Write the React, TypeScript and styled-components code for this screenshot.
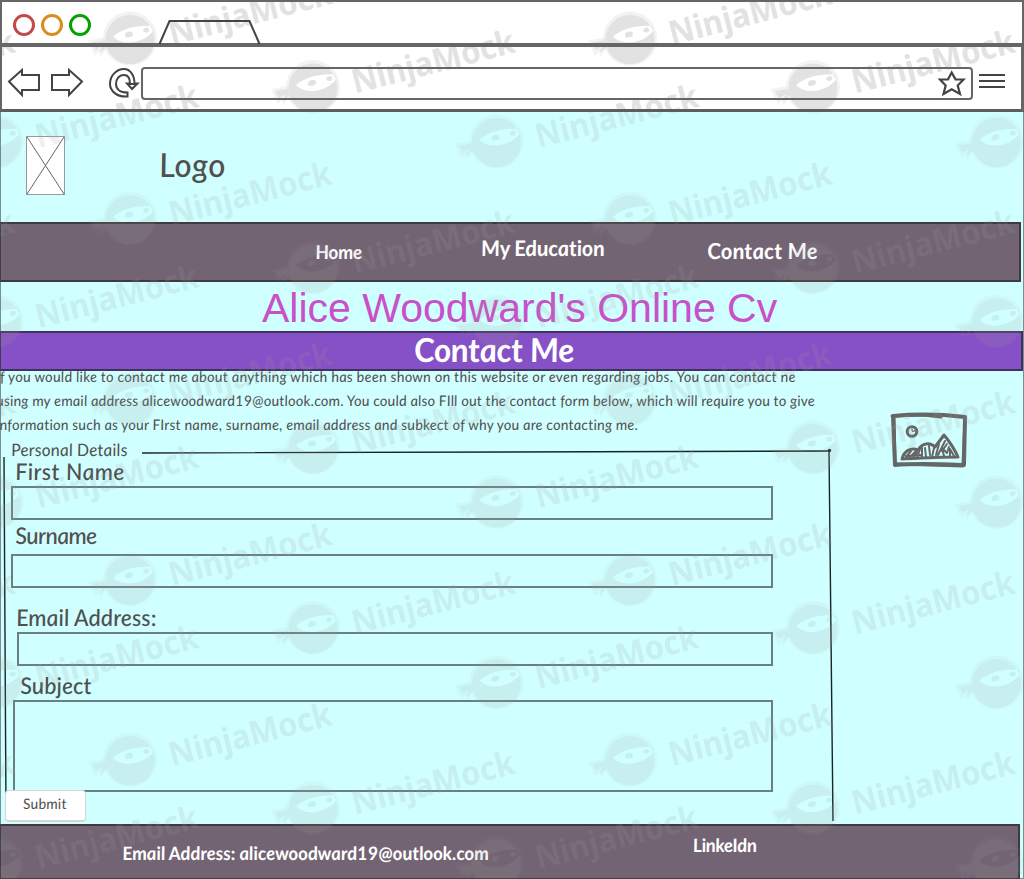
import React from "react";
import styled, { createGlobalStyle, css } from "styled-components";

const INK = "#505050";
const LINE = "#666666";
const PLUM = "#736473";

const GlobalStyle = createGlobalStyle`
  *, *::before, *::after { box-sizing: border-box; }
  body { margin: 0; }
`;

/* Single-storey italic letterforms, straightened up to read as handwriting. */
const hand = css`
  font-family: Lato, "Liberation Sans", sans-serif;
  font-style: italic;
  white-space: nowrap;
`;

const upright = css`
  transform: skewX(6deg);
`;

const Upright = styled.span`
  display: inline-block;
  ${upright}
`;

const Page = styled.div`
  position: relative;
  display: flex;
  flex-direction: column;
  width: 1024px;
  height: 879px;
  overflow: hidden;
  background: #d0ffff;
`;

/* ---------- browser chrome ---------- */

const Chrome = styled.header`
  position: relative;
  flex: none;
  display: flex;
  flex-direction: column;
  height: 112px;
  overflow: hidden;
  background: #fff;
  border: solid ${LINE};
  border-width: 2px 2px 0;
`;

const TitleBar = styled.div`
  position: relative;
  display: flex;
  align-items: flex-start;
  height: 45px;
  padding: 12px 0 0 11px;
  border-bottom: 4px solid ${LINE};
`;

const Lights = styled.div`
  display: flex;
  gap: 6px;
`;

const Light = styled.span<{ $color: string }>`
  width: 22px;
  height: 22px;
  border: 3px solid ${(p) => p.$color};
  border-radius: 50%;
`;

const TabShape = styled.svg`
  display: block;
  margin: 5px 0 -4px 67px;
`;

const AddressRow = styled.div`
  position: relative;
  display: flex;
  align-items: center;
  height: 65px;
  padding: 10px 0 0 5px;
  border-right: 1px solid ${LINE};
  border-bottom: 3px solid #5d5d5d;
`;

const NavIcons = styled.svg`
  flex: none;
  display: block;
`;

const UrlBox = styled.div`
  display: flex;
  align-items: center;
  justify-content: flex-end;
  width: 832px;
  height: 33px;
  padding-right: 5px;
  border: 2px solid ${LINE};
  border-radius: 4px;
`;

const MenuLines = styled.div`
  display: flex;
  flex-direction: column;
  gap: 4px;
  width: 26px;
  margin: 0 0 4px 6px;
`;

const MenuLine = styled.span`
  height: 2px;
  background: #444;
`;

/* ---------- site header ---------- */

const Banner = styled.div`
  flex: none;
  display: flex;
  align-items: flex-start;
  height: 110px;
  padding: 24px 0 0 26px;
`;

const Placeholder = styled.svg`
  display: block;
`;

const LogoText = styled.div`
  ${hand}
  ${upright}
  margin: 8px 0 0 94px;
  font-size: 33px;
  line-height: 40px;
  letter-spacing: 0.5px;
  font-weight: 500;
  color: ${INK};
`;

const NavBar = styled.nav`
  flex: none;
  display: flex;
  width: 1021px;
  height: 60px;
  padding-left: 315px;
  background: ${PLUM};
  border: 2px solid #40393f;
  border-left-width: 1px;
`;

const NavLink = styled.a<{ $width: number; $top: number; $size: number; $track: number }>`
  ${hand}
  ${upright}
  width: ${(p) => p.$width}px;
  margin-top: ${(p) => p.$top}px;
  font-size: ${(p) => p.$size}px;
  letter-spacing: ${(p) => p.$track}px;
  line-height: 26px;
  font-weight: 700;
  color: #fff;
`;

const SiteTitle = styled.h1`
  flex: none;
  height: 49px;
  margin: 0;
  padding-left: 262px;
  font: 400 41px/52px "Liberation Sans", Arial, sans-serif;
  white-space: nowrap;
  color: #c850c8;
`;

const PageBand = styled.h2`
  ${hand}
  position: relative;
  flex: none;
  width: 1023px;
  height: 40px;
  margin: 0;
  padding-left: 413px;
  font-size: 33px;
  font-weight: 700;
  line-height: 33px;
  letter-spacing: -0.3px;
  color: #fff;
  background: #8650c6;
  border: 2px solid #44305c;
  border-left-width: 1px;
`;

/* ---------- contact section ---------- */

const Main = styled.main`
  flex: none;
  display: flex;
  height: 453px;
`;

const Column = styled.div`
  flex: none;
  width: 834px;
`;

const Intro = styled.div`
  height: 66px;
  overflow: hidden;
`;

const IntroLine = styled.p<{ $track: number }>`
  ${hand}
  ${upright}
  margin: 0 0 0 -4px;
  font-size: 14.5px;
  line-height: 24px;
  letter-spacing: ${(p) => p.$track}px;
  color: ${INK};

  &:first-child { margin-top: -6px; }
`;

const Form = styled.form`
  position: relative;
  display: flex;
  flex-direction: column;
  align-items: flex-start;
  height: 387px;
  padding-top: 3px;
`;

const FrameLines = styled.svg`
  position: absolute;
  left: 0;
  top: 0;
`;

const Legend = styled.div`
  ${hand}
  ${upright}
  margin-left: 11px;
  font-size: 17px;
  line-height: 20px;
  letter-spacing: 0.2px;
  color: ${INK};
`;

const Label = styled.label<{ $left: number; $top: number; $track: number }>`
  ${hand}
  ${upright}
  margin: ${(p) => p.$top}px 0 0 ${(p) => p.$left}px;
  font-size: 23px;
  line-height: 22px;
  letter-spacing: ${(p) => p.$track}px;
  font-weight: 500;
  color: ${INK};
`;

const Field = styled.div<{ $left: number; $top: number; $height?: number }>`
  flex: none;
  width: ${(p) => 773 - p.$left}px;
  height: ${(p) => p.$height ?? 34}px;
  margin: ${(p) => p.$top}px 0 0 ${(p) => p.$left}px;
  border: 2px solid #6a8080;
`;

const Submit = styled.button`
  ${hand}
  position: relative;
  z-index: 2;
  flex: none;
  width: 81px;
  height: 32px;
  margin: -2px 0 0 5px;
  padding: 0 2px 4px 0;
  font-size: 14.5px;
  letter-spacing: 0.2px;
  color: ${INK};
  background: #fff;
  border: 1px solid #d6d6d6;
  border-bottom-width: 2px;
  border-radius: 4px;
`;

const Aside = styled.aside`
  padding: 41px 0 0 55px;
`;

/* ---------- footer ---------- */

const Footer = styled.footer`
  flex: 1;
  display: flex;
  width: 1020px;
  padding-left: 122px;
  background: ${PLUM};
  border: 2px solid #40393f;
  border-width: 2px 2px 1px 1px;
`;

const FooterText = styled.span<{ $width: number; $top: number; $track: number }>`
  ${hand}
  ${upright}
  width: ${(p) => p.$width}px;
  margin-top: ${(p) => p.$top}px;
  font-size: 18.5px;
  font-weight: 700;
  line-height: 22px;
  letter-spacing: ${(p) => p.$track}px;
  color: #fff;
`;

/* ---------- watermark ---------- */

const MarkLayer = styled.div<{ $from: number; $to: number; $opacity: number }>`
  position: absolute;
  left: 0;
  top: ${(p) => p.$from}px;
  width: 1024px;
  height: ${(p) => p.$to - p.$from}px;
  overflow: hidden;
  pointer-events: none;
  opacity: ${(p) => p.$opacity};
`;

const ChromeMarks = styled.div`
  position: absolute;
  left: -2px;
  top: -2px;
`;

const PageEdge = styled.div`
  position: absolute;
  top: 111px;
  bottom: 0;
  left: 0;
  right: 0;
  border: solid rgba(60, 70, 75, 0.6);
  border-width: 0 1px 1px;
  pointer-events: none;
`;

const Mark = ({ x, y }: { x: number; y: number }) => (
  <g transform={`translate(${x} ${y})`}>
    <path
      fillRule="evenodd"
      opacity=".4"
      d="M-27 0A27 27 0 1 1 27 0A27 27 0 1 1 -27 0M-17 -2C-8 -10 8 -14 22 -12.500C23 -10 23 -8 22 -6C12 5 -8 8 -17 -2Z"
    />
    <path
      fillRule="evenodd"
      d="M-24.500 1A24.500 24.500 0 1 1 24.500 1A24.500 24.500 0 1 1 -24.500 1M-17 -2C-8 -10 8 -14 22 -12.500C23 -10 23 -8 22 -6C12 5 -8 8 -17 -2Z"
    />
    <path d="M-26 -1L-42 2L-35 17L-30 12L-30 19L-23 9Z" opacity=".4" />
    <path d="M-25 2L-38 4L-34 11L-27 7L-31 15L-23 8Z" />
    <path d="M-5 -3Q-5 -6.500 -1 -7L2.500 -6.500Q3.500 -4 2 -2L-2 -1Q-5 -1 -5 -3ZM13 -8Q14 -11 17.500 -11L19.500 -9Q19 -6.500 17 -6Q14 -5.500 13 -8Z" />
    <text
      transform="translate(42 6.500) rotate(-14.400)"
      fontFamily="'Noto Sans', sans-serif"
      fontWeight="700"
      fontSize="33"
      textLength="167"
      lengthAdjust="spacingAndGlyphs"
      strokeWidth=".7"
    >
      NinjaMock
    </text>
  </g>
);

const Watermark = ({ from, to, color, opacity }: { from: number; to: number; color: string; opacity: number }) => {
  const marks: { x: number; y: number }[] = [];
  for (let col = -1; col < 3; col++) {
    for (let row = -1; row < 6; row++) {
      const x = col * 500;
      const y = row * 180.3;
      marks.push({ x: x + 130, y: y + 38.5 }, { x: x + 313, y: y + 87 }, { x: x + 496.5, y: y + 141.5 });
    }
  }
  const visible = marks.filter(
    (m) => m.x > -215 && m.x < 1066 && m.y > from - 28 && m.y < to + 45
  );
  return (
    <MarkLayer $from={from} $to={to} $opacity={opacity} aria-hidden>
      <svg width="1024" height={to - from} viewBox={`0 ${from} 1024 ${to - from}`} fill={color} >
        {visible.map((m) => (
          <Mark key={`${m.x}-${m.y}`} x={m.x} y={m.y} />
        ))}
      </svg>
    </MarkLayer>
  );
};

const PictureIcon = () => (
  <svg width="80" height="58" viewBox="0 0 80 58" fill="none" stroke="#666" strokeLinecap="round" strokeLinejoin="round">
    <path d="M4 4C25 2 50 2 76 5L75 53C50 52 28 51 6 53Z" strokeWidth="4" />
    <path d="M3 4L34 3L52 5M5 5L6 52M76 7L74 52M8 52L74 54" strokeWidth="3" />
    <circle cx="23" cy="19.500" r="4.800" strokeWidth="3" />
    <path d="M23 17.500q0 3 3 1" strokeWidth="1.300" />
    <path d="M13 47C15 39 22 35 29 38C33 31 41 30 46 35C49 31 52 27 55 23C60 29 65 36 69 45C50 45 32 46 13 47Z" strokeWidth="3" />
    <path
      d="M17 45L22 39M20 46L27 39M24 46L28 40M28 46L31 37M33 45L33 36M37 45L36 36M41 43L40 34M43 45L45 36M47 43L50 32M49 43L56 29M53 39L58 32M55 44L53 36L58 41L60 35M61 44L61 37L65 44M17 44L32 43"
      strokeWidth="2"
    />
  </svg>
);

export default function App() {
  return (
    <Page>
      <GlobalStyle />

      <Chrome>
        <ChromeMarks>
          <Watermark from={0} to={112} color="#bfbfbf" opacity={0.45} />
        </ChromeMarks>
        <TitleBar>
          <Lights>
            <Light $color="#bf4b4b" />
            <Light $color="#dc8c1e" />
            <Light $color="#05a005" />
          </Lights>
          <TabShape width="104" height="26" viewBox="0 0 104 26" fill="none" stroke="#444" strokeWidth="2">
            <path d="M1.500 25L11.500 2H91.500L101.500 25" />
          </TabShape>
        </TitleBar>
        <AddressRow>
          <NavIcons width="134" height="34" viewBox="7 66 134 34" fill="none" stroke="#444" strokeWidth="2">
            <path d="M9 81.500L22 70V75H39V90H22V95Z" />
            <path d="M82 81.500L69 70V75H52V90H69V95Z" />
            <path d="M127.500 96.500C116 97.500 110 90 110 84C110 75 117 69 124 69C130 69 134.500 75 134.500 83.500H137.500L132 89L127 83.500H130C130 78 127.500 75 124 75C119 75 116 79 116 84C116 89 120 92.500 127.500 92.500Z" />
            <path d="M127 84H137" />
          </NavIcons>
          <UrlBox>
            <svg width="28" height="27" viewBox="938 70 28 27" fill="none" stroke="#444" strokeWidth="2.200">
              <path d="M951.700 72.500L955.500 79.300L963.500 79.500L957.700 85.500L960 94L951.700 89.300L943.500 94L945.700 85.500L940 79.500L948 79.300Z" />
            </svg>
          </UrlBox>
          <MenuLines>
            <MenuLine />
            <MenuLine />
            <MenuLine />
          </MenuLines>
        </AddressRow>
      </Chrome>

      <Banner>
        <Placeholder width="39" height="59" viewBox="0 0 39 59" stroke="#666" fill="none">
          <rect x=".5" y=".5" width="38" height="58" fill="#fff" stroke="#999" />
          <path d="M1 1L38 58M38 1L1 58" />
        </Placeholder>
        <LogoText>Logo</LogoText>
      </Banner>

      <NavBar>
        <NavLink $width={166} $top={15} $size={19} $track={-0.3}>Home</NavLink>
        <NavLink $width={226} $top={11} $size={21.5} $track={-0.1}>My Education</NavLink>
        <NavLink $width={120} $top={14} $size={22} $track={0.2}>Contact Me</NavLink>
      </NavBar>

      <SiteTitle>Alice Woodward's Online Cv</SiteTitle>
      <PageBand>
        <Upright>Contact Me</Upright>
      </PageBand>

      <Main>
        <Column>
          <Intro>
            <IntroLine $track={0.28}>
              If you would like to contact me about anything which has been shown on this website or even regarding jobs. You can contact ne
            </IntroLine>
            <IntroLine $track={0.2}>
              using my email address alicewoodward19@outlook.com. You could also FIll out the contact form below, which will require you to give
            </IntroLine>
            <IntroLine $track={0.21}>
              information such as your FIrst name, surname, email address and subkect of why you are contacting me.
            </IntroLine>
          </Intro>
          <Form>
            <FrameLines width="840" height="387" viewBox="0 437 840 387" fill="none" stroke="#1c2424" strokeWidth="1.400">
              <path d="M4 457L6 811M142 453L830 451M829 450L833 821" />
              <circle cx="829.500" cy="450.500" r="1" />
            </FrameLines>
            <Legend>Personal Details</Legend>
            <Label $left={15} $top={0} $track={0.45}>First Name</Label>
            <Field $left={11} $top={4} />
            <Label $left={15} $top={4} $track={-0.5}>Surname</Label>
            <Field $left={11} $top={8} />
            <Label $left={16} $top={18} $track={0.1}>Email Address:</Label>
            <Field $left={17} $top={4} />
            <Label $left={20} $top={8} $track={0.1}>Subject</Label>
            <Field $left={13} $top={4} $height={92} />
            <Submit type="button">
              <Upright>Submit</Upright>
            </Submit>
          </Form>
        </Column>
        <Aside>
          <PictureIcon />
        </Aside>
      </Main>

      <Footer>
        <FooterText $width={571} $top={16} $track={-0.03}>Email Address: alicewoodward19@outlook.com</FooterText>
        <FooterText $width={80} $top={8} $track={-0.3}>LinkeIdn</FooterText>
      </Footer>

      <Watermark from={112} to={879} color="#9b9b9b" opacity={0.165} />
      <PageEdge />
    </Page>
  );
}
